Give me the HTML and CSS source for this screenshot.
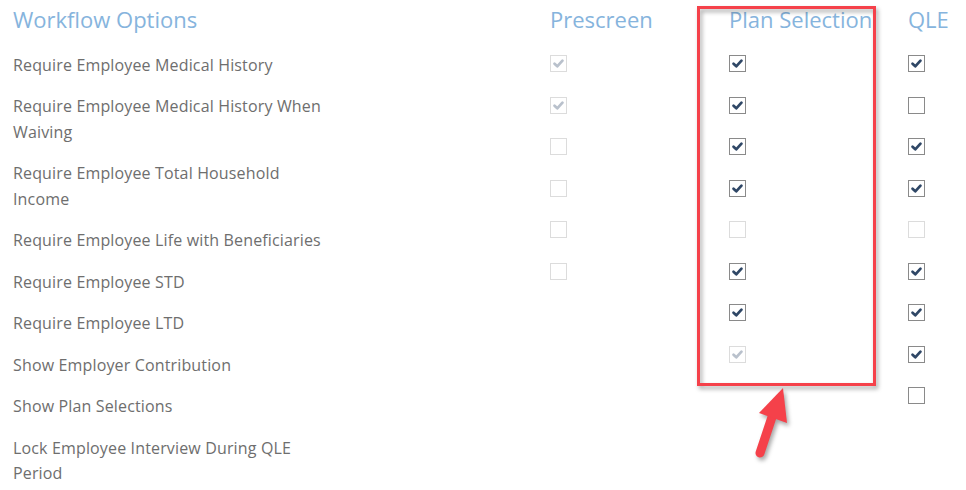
FILE: index.html
```html
<!DOCTYPE html>
<html>
<head>
<meta charset="utf-8">
<link rel="stylesheet" href="styles.css">
</head>
<body>
<div class="page">
  <div class="grid">
    <div class="col col-label">
      <h2 class="head">Workflow Options</h2>
      <ul class="labels">
        <li>Require Employee Medical History</li>
        <li>Require Employee Medical History When<br>Waiving</li>
        <li>Require Employee Total Household<br>Income</li>
        <li>Require Employee Life with Beneficiaries</li>
        <li>Require Employee STD</li>
        <li>Require Employee LTD</li>
        <li>Show Employer Contribution</li>
        <li>Show Plan Selections</li>
        <li>Lock Employee Interview During QLE<br>Period</li>
      </ul>
    </div>
    <div class="col col-check">
      <h2 class="head">Prescreen</h2>
      <div class="boxes">
        <span class="cb disabled checked"><svg viewBox="0 0 17 17"><path d="M4 8.8 L7.1 11.7 L13 5.3"/></svg></span>
        <span class="cb disabled checked"><svg viewBox="0 0 17 17"><path d="M4 8.8 L7.1 11.7 L13 5.3"/></svg></span>
        <span class="cb disabled"></span>
        <span class="cb disabled"></span>
        <span class="cb disabled"></span>
        <span class="cb disabled"></span>
      </div>
    </div>
    <div class="col col-check">
      <h2 class="head">Plan Selection</h2>
      <div class="boxes">
        <span class="cb checked"><svg viewBox="0 0 17 17"><path d="M4 8.8 L7.1 11.7 L13 5.3"/></svg></span>
        <span class="cb checked"><svg viewBox="0 0 17 17"><path d="M4 8.8 L7.1 11.7 L13 5.3"/></svg></span>
        <span class="cb checked"><svg viewBox="0 0 17 17"><path d="M4 8.8 L7.1 11.7 L13 5.3"/></svg></span>
        <span class="cb checked"><svg viewBox="0 0 17 17"><path d="M4 8.8 L7.1 11.7 L13 5.3"/></svg></span>
        <span class="cb disabled"></span>
        <span class="cb checked"><svg viewBox="0 0 17 17"><path d="M4 8.8 L7.1 11.7 L13 5.3"/></svg></span>
        <span class="cb checked"><svg viewBox="0 0 17 17"><path d="M4 8.8 L7.1 11.7 L13 5.3"/></svg></span>
        <span class="cb disabled checked"><svg viewBox="0 0 17 17"><path d="M4 8.8 L7.1 11.7 L13 5.3"/></svg></span>
      </div>
    </div>
    <div class="col col-check col-last">
      <h2 class="head">QLE</h2>
      <div class="boxes">
        <span class="cb checked"><svg viewBox="0 0 17 17"><path d="M4 8.8 L7.1 11.7 L13 5.3"/></svg></span>
        <span class="cb"></span>
        <span class="cb checked"><svg viewBox="0 0 17 17"><path d="M4 8.8 L7.1 11.7 L13 5.3"/></svg></span>
        <span class="cb checked"><svg viewBox="0 0 17 17"><path d="M4 8.8 L7.1 11.7 L13 5.3"/></svg></span>
        <span class="cb disabled"></span>
        <span class="cb checked"><svg viewBox="0 0 17 17"><path d="M4 8.8 L7.1 11.7 L13 5.3"/></svg></span>
        <span class="cb checked"><svg viewBox="0 0 17 17"><path d="M4 8.8 L7.1 11.7 L13 5.3"/></svg></span>
        <span class="cb checked"><svg viewBox="0 0 17 17"><path d="M4 8.8 L7.1 11.7 L13 5.3"/></svg></span>
        <span class="cb"></span>
      </div>
    </div>
  </div>
  <div class="highlight"></div>
  <svg class="arrow" width="60" height="80" viewBox="0 0 60 80">
    <path class="arrow-shaft" d="M32 34 L20 70"/>
    <path class="arrow-head" d="M43 5 L47 40 L19 30 Z"/>
  </svg>
</div>
</body>
</html>
```
FILE: styles.css
```css
html, body {
  margin: 0;
  padding: 0;
  background: #fff;
}
body {
  font-family: "Open Sans", "Liberation Sans", sans-serif;
  color: #666;
}
.page {
  position: relative;
  width: 966px;
  height: 490px;
  overflow: hidden;
}
.grid {
  display: flex;
  padding-left: 13px;
}
.col-label {
  width: 537px;
}
.col-check {
  width: 179px;
}
.col-last {
  width: auto;
  flex: 1;
}
.head {
  margin: 0;
  padding-top: 6px;
  height: 27px;
  font-size: 22px;
  line-height: 27px;
  font-weight: 400;
  color: #86b4dd;
  white-space: nowrap;
}
.labels {
  list-style: none;
  margin: 0;
  padding: 19.5px 0 0 0;
  display: flex;
  flex-direction: column;
  gap: 16px;
  font-size: 16px;
  line-height: 25.5px;
  letter-spacing: 0.15px;
  color: #6e6e6e;
}
.boxes {
  padding-top: 22px;
  display: flex;
  flex-direction: column;
  gap: 24.5px;
}
.cb {
  box-sizing: border-box;
  display: block;
  width: 17px;
  height: 17px;
  border: 1px solid #8a8a8a;
  background: #fff;
}
.cb svg {
  display: block;
  width: 15px;
  height: 15px;
  margin: 0;
}
.cb svg path {
  fill: none;
  stroke: #2f4766;
  stroke-width: 3.1;
  stroke-linecap: round;
  stroke-linejoin: round;
}
.cb.disabled {
  border-color: #dcdcdc;
}
.cb.disabled svg path {
  stroke: #b9c1cc;
}
.highlight {
  position: absolute;
  left: 697px;
  top: 6px;
  width: 179px;
  height: 380px;
  box-sizing: border-box;
  border: 3px solid #f5414a;
  filter: drop-shadow(2px 3px 2px rgba(0, 0, 0, 0.35));
}
.arrow {
  position: absolute;
  left: 740px;
  top: 383px;
  overflow: visible;
  filter: drop-shadow(2px 3px 2px rgba(0, 0, 0, 0.35));
}
.arrow-shaft {
  fill: none;
  stroke: #f5414a;
  stroke-width: 9;
  stroke-linecap: round;
}
.arrow-head {
  fill: #f5414a;
}
```
